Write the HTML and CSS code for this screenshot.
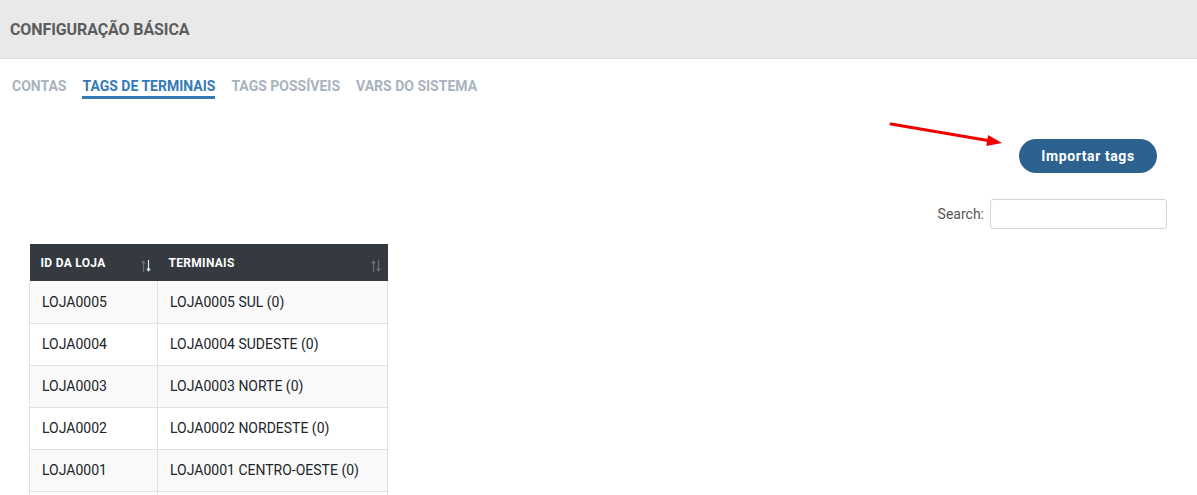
FILE: index.html
```html
<!DOCTYPE html>
<html lang="pt-BR">
<head>
<meta charset="utf-8">
<title>Configuração Básica</title>
<link rel="stylesheet" href="styles.css">
</head>
<body>
<header class="page-header">
  <h1 class="page-title">CONFIGURAÇÃO BÁSICA</h1>
</header>
<nav class="tabs">
  <a class="tab">CONTAS</a>
  <a class="tab active">TAGS DE TERMINAIS</a>
  <a class="tab">TAGS POSSÍVEIS</a>
  <a class="tab">VARS DO SISTEMA</a>
</nav>
<div class="actions">
  <svg class="arrow" width="116" height="27" viewBox="0 0 116 27">
    <line x1="2" y1="3" x2="99" y2="19.5" stroke="#f20000" stroke-width="3" stroke-linecap="round"/>
    <polygon points="113,22 99.1,14.1 97.3,24.9" fill="#f20000"/>
  </svg>
  <button class="btn-import">Importar tags</button>
</div>
<div class="search-row">
  <label class="search-label">Search:</label>
  <input class="search-input" type="text">
</div>
<table class="data-table">
  <thead>
    <tr>
      <th class="col-id"><span class="th-inner">ID DA LOJA<svg class="sort" width="10" height="12" viewBox="0 0 10 12"><path d="M2.5 12V1.5M0.8 3.3L2.5 1.2L4.2 3.3" stroke="#6b7077" stroke-width="1.2" fill="none"/><path d="M7.5 0V10.5M5.8 8.7L7.5 10.8L9.2 8.7" stroke="#dfe8ff" stroke-width="1.2" fill="none"/></svg></span></th>
      <th class="col-term"><span class="th-inner">TERMINAIS<svg class="sort" width="10" height="12" viewBox="0 0 10 12"><path d="M2.5 12V1.5M0.8 3.3L2.5 1.2L4.2 3.3" stroke="#6b7077" stroke-width="1.2" fill="none"/><path d="M7.5 0V10.5M5.8 8.7L7.5 10.8L9.2 8.7" stroke="#6b7077" stroke-width="1.2" fill="none"/></svg></span></th>
    </tr>
  </thead>
  <tbody>
    <tr><td>LOJA0005</td><td>LOJA0005 SUL (0)</td></tr>
    <tr><td>LOJA0004</td><td>LOJA0004 SUDESTE (0)</td></tr>
    <tr><td>LOJA0003</td><td>LOJA0003 NORTE (0)</td></tr>
    <tr><td>LOJA0002</td><td>LOJA0002 NORDESTE (0)</td></tr>
    <tr><td>LOJA0001</td><td>LOJA0001 CENTRO-OESTE (0)</td></tr>
    <tr><td>&nbsp;</td><td>&nbsp;</td></tr>
  </tbody>
</table>
</body>
</html>
```
FILE: styles.css
```css
html, body {
  margin: 0;
  padding: 0;
  background: #ffffff;
  font-family: Roboto, "Liberation Sans", Arial, sans-serif;
  overflow: hidden;
}

body {
  height: 495px;
}

.page-header {
  height: 58px;
  background: #e9e9e9;
  border-bottom: 1px solid #dcdcdc;
  display: flex;
  align-items: center;
  padding-left: 10px;
}

.page-title {
  margin: 0;
  font-size: 16px;
  font-weight: 700;
  color: #5c5c5c;
  letter-spacing: -0.1px;
}

.tabs {
  display: flex;
  gap: 16px;
  padding: 19px 0 0 12px;
}

.tab {
  font-size: 14px;
  font-weight: 700;
  color: #a9b3bd;
  padding-bottom: 2px;
  border-bottom: 3px solid transparent;
  line-height: 16px;
}

.tab.active {
  color: #337ab7;
  border-bottom-color: #337ab7;
}

.actions {
  display: flex;
  justify-content: flex-end;
  align-items: flex-start;
  padding: 22px 40px 0 0;
  height: 43px;
}

.arrow {
  margin-top: 0;
  margin-right: 14px;
}

.btn-import {
  margin-top: 18px;
  width: 138px;
  height: 34px;
  border: none;
  border-radius: 17px;
  background: #2c6190;
  color: #ffffff;
  font-family: Roboto, "Liberation Sans", Arial, sans-serif;
  font-size: 14px;
  font-weight: 700;
  letter-spacing: 0.6px;
  padding: 0;
}

.search-row {
  display: flex;
  justify-content: flex-end;
  align-items: center;
  gap: 6px;
  padding: 35px 30px 0 0;
}

.search-label {
  font-size: 14px;
  color: #555;
}

.search-input {
  width: 177px;
  height: 30px;
  box-sizing: border-box;
  border: 1px solid #cfd4d9;
  border-radius: 3px;
  outline: none;
}

.data-table {
  margin: 15px 0 0 29px;
  border-collapse: collapse;
  width: 359px;
  font-size: 14px;
  color: #212529;
}

.data-table thead th {
  background: #343a40;
  color: #ffffff;
  font-size: 12px;
  font-weight: 700;
  text-align: left;
  height: 37px;
  padding: 0 7px 0 11px;
  box-sizing: border-box;
  letter-spacing: 0.3px;
}

.th-inner {
  display: flex;
  justify-content: space-between;
  align-items: center;
}

.sort {
  flex: none;
  margin-top: 6px;
}

.col-id {
  width: 128px;
}

.data-table tbody td {
  height: 42px;
  box-sizing: border-box;
  padding: 0 12px;
  border: 1px solid #dee2e6;
  border-top: none;
}

.data-table tbody tr:nth-child(odd) td {
  background: #f9f9f9;
}
```
